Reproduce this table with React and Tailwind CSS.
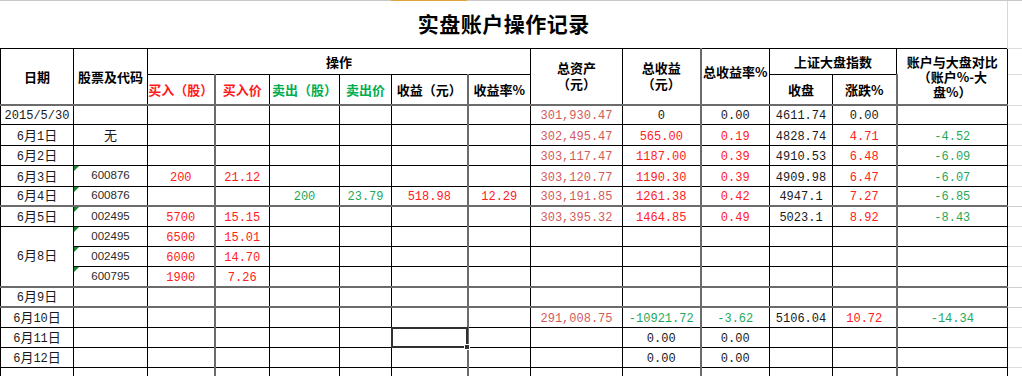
import React from "react";

const R = "text-[#ff2020]";
const G = "text-[#1fa85a]";
const A = "text-[#d35a5a]";
const K = "text-[#1a1a1a]";

const colWidths = [
  "w-[73px]", "w-[74px]", "w-[67px]", "w-[55px]", "w-[70px]", "w-[52px]", "w-[76px]",
  "w-[63px]", "w-[92px]", "w-[78px]", "w-[69px]", "w-[63px]", "w-[64px]", "w-[111px]", "w-[15px]",
];

// columns whose right edge is drawn heavier in the sheet
const thickRight = [2, 6, 9, 12];

const v = (t, c) => ({ t, c });

const rows = [
  { h: "h-[19px]", date: "2015/5/30", code: "", vals: [null, null, null, null, null, null, v("301,930.47", A), v("0", K), v("0.00", K), v("4611.74", K), v("0.00", K), null] },
  { h: "h-[21px]", date: "6月1日", code: "无", vals: [null, null, null, null, null, null, v("302,495.47", A), v("565.00", R), v("0.19", R), v("4828.74", K), v("4.71", R), v("-4.52", G)] },
  { h: "h-[20px]", date: "6月2日", code: "", vals: [null, null, null, null, null, null, v("303,117.47", A), v("1187.00", R), v("0.39", R), v("4910.53", K), v("6.48", R), v("-6.09", G)] },
  { h: "h-[21px]", date: "6月3日", code: "600876", tri: true, vals: [v("200", R), v("21.12", R), null, null, null, null, v("303,120.77", A), v("1190.30", R), v("0.39", R), v("4909.98", K), v("6.47", R), v("-6.07", G)] },
  { h: "h-[20px]", date: "6月4日", code: "600876", tri: true, thick: true, vals: [null, null, v("200", G), v("23.79", G), v("518.98", R), v("12.29", R), v("303,191.85", A), v("1261.38", R), v("0.42", R), v("4947.1", K), v("7.27", R), v("-6.85", G)] },
  { h: "h-[20px]", date: "6月5日", code: "002495", tri: true, vals: [v("5700", R), v("15.15", R), null, null, null, null, v("303,395.32", A), v("1464.85", R), v("0.49", R), v("5023.1", K), v("8.92", R), v("-8.43", G)] },
  { h: "h-[20px]", date: "6月8日", span: 3, code: "002495", tri: true, vals: [v("6500", R), v("15.01", R), null, null, null, null, null, null, null, null, null, null] },
  { h: "h-[20px]", skipDate: true, code: "002495", tri: true, vals: [v("6000", R), v("14.70", R), null, null, null, null, null, null, null, null, null, null] },
  { h: "h-[21px]", skipDate: true, code: "600795", tri: true, thick: true, vals: [v("1900", R), v("7.26", R), null, null, null, null, null, null, null, null, null, null] },
  { h: "h-[20px]", date: "6月9日", code: "", thick: true, vals: Array(12).fill(null) },
  { h: "h-[20px]", date: "6月10日", code: "", vals: [null, null, null, null, null, null, v("291,008.75", A), v("-10921.72", G), v("-3.62", G), v("5106.04", K), v("10.72", R), v("-14.34", G)] },
  { h: "h-[20px]", date: "6月11日", code: "", sel: 6, vals: [null, null, null, null, null, null, null, v("0.00", K), v("0.00", K), null, null, null] },
  { h: "h-[20px]", date: "6月12日", code: "", vals: [null, null, null, null, null, null, null, v("0.00", K), v("0.00", K), null, null, null] },
  { h: "h-[20px]", date: "", code: "", vals: Array(12).fill(null) },
];

const base = "border border-black p-0 text-center";
const heavyR = "border-r-2 border-r-[#6b6b6b]";
const heavyB = "border-b-2 border-b-[#6b6b6b]";
const mono = "font-['Liberation_Mono','Noto_Sans_CJK_SC',monospace] text-[12px] leading-[14px]";
const head = "font-['Noto_Sans_CJK_SC',sans-serif] font-bold text-[13px] leading-[15px] whitespace-nowrap";

// dates mix half-width digits with slightly larger CJK glyphs
function DateText({ s }) {
  return s.split("").map((ch, i) =>
    /[\u4e00-\u9fff]/.test(ch) ? (
      <span key={i} className="font-['Noto_Sans_CJK_SC',sans-serif] text-[13px]">{ch}</span>
    ) : (
      <span key={i}>{ch}</span>
    )
  );
}

function Grid({ thick }) {
  return <td className={`p-0 border-b ${thick ? "border-b-[#cfcfcf]" : "border-b-[#dcdcdc]"}`} />;
}

export default function App() {
  return (
    <div className="w-[1022px] h-[376px] overflow-hidden bg-white">
      {/* sheet top edge with the highlighted column */}
      <div className="flex h-[1px]">
        <div className="w-[391px] bg-[#c8c8c8]" />
        <div className="w-[76px] bg-[#e0a438]" />
        <div className="flex-1 bg-[#c8c8c8]" />
      </div>

      <table className="border-collapse table-fixed w-[1022px]">
        <colgroup>
          {colWidths.map((w, i) => (
            <col key={i} className={w} />
          ))}
        </colgroup>
        <tbody>
          <tr className="h-[47px]">
            <td colSpan={14} className="p-0 text-center border-r border-r-[#d8d8d8]">
              <span className="font-['Noto_Sans_CJK_SC',sans-serif] font-bold text-[21px] leading-[24px] text-black tracking-[0.5px]">
                实盘账户操作记录
              </span>
            </td>
            <td className="p-0 border-b border-b-[#dcdcdc]" />
          </tr>

          <tr className="h-[26px]">
            <td rowSpan={2} className={`${base} ${heavyB} ${head}`}>日期</td>
            <td rowSpan={2} className={`${base} ${heavyB} ${head}`}>股票及代码</td>
            <td colSpan={6} className={`${base} ${head}`}>操作</td>
            <td rowSpan={2} className={`${base} ${heavyB} ${head} leading-[16px]`}>
              总资产
              <br />
              （元）
            </td>
            <td rowSpan={2} className={`${base} ${heavyB} ${heavyR} ${head} leading-[16px]`}>
              总收益
              <br />
              （元）
            </td>
            <td rowSpan={2} className={`${base} ${heavyB} ${head} pb-[10px]`}>总收益率%</td>
            <td colSpan={2} className={`${base} ${head}`}>上证大盘指数</td>
            <td rowSpan={2} className={`${base} ${heavyB} ${head} leading-[15px]`}>
              账户与大盘对比
              <br />
              （账户%-大
              <br />
              盘%）
            </td>
            <Grid />
          </tr>

          <tr className="h-[31px]">
            <td className={`${base} ${heavyB} ${heavyR} ${head} text-[#ff1a1a]`}>买入（股）</td>
            <td className={`${base} ${heavyB} ${head} text-[#ff1a1a]`}>买入价</td>
            <td className={`${base} ${heavyB} ${head} text-[#00ad4f]`}>卖出（股）</td>
            <td className={`${base} ${heavyB} ${head} text-[#00ad4f]`}>卖出价</td>
            <td className={`${base} ${heavyB} ${heavyR} ${head}`}>收益（元）</td>
            <td className={`${base} ${heavyB} ${head}`}>收益率%</td>
            <td className={`${base} ${heavyB} ${head}`}>收盘</td>
            <td className={`${base} ${heavyB} ${heavyR} ${head}`}>涨跌%</td>
            <Grid />
          </tr>

          {rows.map((row, ri) => {
            const hb = row.thick ? heavyB : "";
            return (
              <tr key={ri} className={row.h}>
                {!row.skipDate && (
                  <td
                    rowSpan={row.span || 1}
                    className={`${base} ${row.span ? heavyB : hb} ${mono} text-[#1a1a1a] whitespace-nowrap ${row.span ? "align-middle" : "align-bottom pb-[1px]"}`}
                  >
                    <DateText s={row.date} />
                  </td>
                )}
                <td className={`${base} ${hb} relative align-middle whitespace-nowrap ${row.code === "无" ? "font-['Noto_Sans_CJK_SC',sans-serif] text-[13px] leading-[15px] text-[#1a1a1a]" : "font-['Liberation_Sans',sans-serif] text-[11.5px] leading-[13px] text-[#2a2a2a]"}`}>
                  {row.tri && (
                    <span className="absolute left-0 top-0 w-0 h-0 border-t-[5px] border-t-[#16862c] border-r-[5px] border-r-transparent" />
                  )}
                  {row.code}
                </td>
                {row.vals.map((cell, ci) => {
                  const col = ci + 2;
                  return (
                    <td
                      key={ci}
                      className={`${base} ${hb} ${thickRight.includes(col) ? heavyR : ""} ${mono} align-bottom pb-[1px] whitespace-nowrap ${cell ? cell.c : ""} ${row.sel === col ? "relative" : ""}`}
                    >
                      {row.sel === col && (
                        <span className="absolute -left-[1px] -top-[1px] -right-[1px] -bottom-[1px] border-2 border-[#303030]">
                          <span className="absolute -right-[4px] -bottom-[4px] w-[6px] h-[6px] bg-[#303030] border border-white" />
                        </span>
                      )}
                      {cell ? cell.t : ""}
                    </td>
                  );
                })}
                <Grid thick={row.thick} />
              </tr>
            );
          })}
        </tbody>
      </table>
    </div>
  );
}
